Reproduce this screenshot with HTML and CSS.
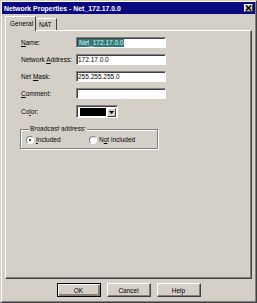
FILE: index.html
```html
<!DOCTYPE html>
<html lang="en">
<head>
    <meta charset="UTF-8">
    <title>Network Properties</title>
    <link rel="stylesheet" href="styles.css">
</head>
<body>
<div class="window">
    <div class="titlebar">
        <span class="title">Network Properties - Net_172.17.0.0</span>
        <span class="close">
            <svg width="7" height="6" viewBox="0 0 7 6"><path d="M1 0.5 L6 5.5 M6 0.5 L1 5.5" stroke="#000" stroke-width="1.5"/></svg>
        </span>
    </div>
    <div class="content">
        <div class="tabs">
            <div class="tab active">General</div>
            <div class="tab">NAT</div>
        </div>
        <div class="panel">
            <div class="row">
                <span class="lbl"><u>N</u>ame:</span>
                <div class="field"><span class="sel">Net_172.17.0.0</span></div>
            </div>
            <div class="row">
                <span class="lbl">Network <u>A</u>ddress:</span>
                <div class="field">172.17.0.0</div>
            </div>
            <div class="row">
                <span class="lbl">Net <u>M</u>ask:</span>
                <div class="field">255.255.255.0</div>
            </div>
            <div class="row spaced">
                <span class="lbl"><u>C</u>omment:</span>
                <div class="field"></div>
            </div>
            <div class="row spaced color-row">
                <span class="lbl">Co<u>l</u>or:</span>
                <div class="combo">
                    <span class="swatch"></span>
                    <span class="drop">
                        <svg width="5" height="3" viewBox="0 0 5 3"><path d="M0 0 H5 L2.5 3 Z" fill="#000"/></svg>
                    </span>
                </div>
            </div>
            <fieldset class="group">
                <legend>Broadcast address:</legend>
                <div class="radios">
                    <span class="radio"><span class="dot checked"></span><u>I</u>ncluded</span>
                    <span class="radio"><span class="dot"></span>N<u>o</u>t included</span>
                </div>
            </fieldset>
        </div>
        <div class="buttons">
            <div class="btn default">OK</div>
            <div class="btn">Cancel</div>
            <div class="btn">Help</div>
        </div>
    </div>
</div>
</body>
</html>
```

FILE: styles.css
```css
body {
    margin: 0;
    padding: 0;
    background-color: #d4d0c8;
    font-family: "Liberation Sans", Arial, sans-serif;
    font-size: 6.5px;
    color: #000;
}

.window {
    width: 257px;
    height: 303px;
    box-sizing: border-box;
    display: flex;
    flex-direction: column;
    padding: 1px;
    border: 1px solid;
    border-color: #d4d0c8 #404040 #404040 #d4d0c8;
    box-shadow: inset 1px 1px 0 #fff, inset -1px -1px 0 #808080;
    background-color: #d4d0c8;
}

.titlebar {
    height: 12px;
    display: flex;
    align-items: center;
    justify-content: space-between;
    padding: 0 2px 0 2px;
    background-color: #0a0a80;
    color: #fff;
}

.title {
    font-weight: bold;
    font-size: 6.9px;
}

.close {
    width: 9px;
    height: 8px;
    box-sizing: border-box;
    display: flex;
    align-items: center;
    justify-content: center;
    background-color: #d4d0c8;
    border: 1px solid;
    border-color: #fff #404040 #404040 #fff;
}

.content {
    flex: 1;
    display: flex;
    flex-direction: column;
    padding: 2px 3px 4px 3px;
}

.tabs {
    height: 14px;
    display: flex;
    align-items: flex-end;
}

.tab {
    height: 12px;
    box-sizing: border-box;
    padding: 2px 4px 0 3px;
    border-top: 1px solid #fff;
    border-right: 1px solid #404040;
    line-height: 8px;
}

.tab.active {
    position: relative;
    z-index: 1;
    height: 15px;
    margin-bottom: -1px;
    width: 31px;
    padding: 3px 0 0 4px;
    border-left: 1px solid #fff;
    background-color: #d4d0c8;
}

.panel {
    flex: 1;
    box-sizing: border-box;
    padding: 6px 10px 0 15px;
    border: 1px solid;
    border-color: #fff #404040 #404040 #fff;
    box-shadow: inset -1px -1px 0 #808080;
}

.row {
    height: 11px;
    display: flex;
    align-items: center;
    margin-bottom: 6px;
}

.row.spaced {
    margin-top: 1px;
}

.row.color-row {
    height: 13px;
    margin-bottom: 0;
}

.lbl {
    width: 55px;
}

.field {
    width: 90px;
    height: 11px;
    box-sizing: border-box;
    padding: 0 0 0 1px;
    display: flex;
    align-items: center;
    background-color: #fff;
    border: 1px solid;
    border-color: #808080 #fff #fff #808080;
    box-shadow: inset 1px 1px 0 #404040;
}

.sel {
    background-color: #2f7b7d;
    color: #e8f0f0;
    padding: 0 1px;
    line-height: 8px;
}

.combo {
    width: 42px;
    height: 13px;
    box-sizing: border-box;
    display: flex;
    align-items: center;
    padding: 2px 1px 1px 3px;
    background-color: #fff;
    border: 1px solid;
    border-color: #808080 #fff #fff #808080;
    box-shadow: inset 1px 1px 0 #404040;
}

.swatch {
    width: 28px;
    height: 8px;
    background-color: #000;
    margin-right: 1px;
}

.drop {
    width: 9px;
    height: 9px;
    box-sizing: border-box;
    display: flex;
    align-items: center;
    justify-content: center;
    background-color: #d4d0c8;
    border: 1px solid;
    border-color: #fff #404040 #404040 #fff;
}

.group {
    width: 127px;
    box-sizing: border-box;
    margin: 7px 0 0 -1px;
    padding: 2px 5px 4px 5px;
    border: 1px solid #808080;
    box-shadow: inset 1px 1px 0 #fff, 1px 1px 0 #fff;
}

.group legend {
    padding: 0 1px;
    margin-left: 3px;
    line-height: 8px;
}

.radios {
    display: flex;
    height: 9px;
    align-items: center;
}

.radio {
    display: flex;
    align-items: center;
    width: 63px;
}

.dot {
    width: 8px;
    height: 8px;
    box-sizing: border-box;
    border-radius: 50%;
    border: 1px solid;
    border-color: #808080 #fff #fff #808080;
    background-color: #fff;
    margin-right: 2px;
    display: flex;
    align-items: center;
    justify-content: center;
}

.dot.checked::after {
    content: "";
    width: 2px;
    height: 2px;
    border-radius: 50%;
    background-color: #000;
}

.buttons {
    display: flex;
    justify-content: center;
    gap: 6px;
    margin-top: 4px;
}

.btn {
    width: 44px;
    height: 14px;
    box-sizing: border-box;
    display: flex;
    align-items: center;
    justify-content: center;
    border: 1px solid;
    border-color: #fff #404040 #404040 #fff;
    box-shadow: inset -1px -1px 0 #808080;
}

.btn.default {
    border: 1px solid #000;
    box-shadow: inset 1px 1px 0 #fff, inset -2px -2px 0 #808080;
}
```
